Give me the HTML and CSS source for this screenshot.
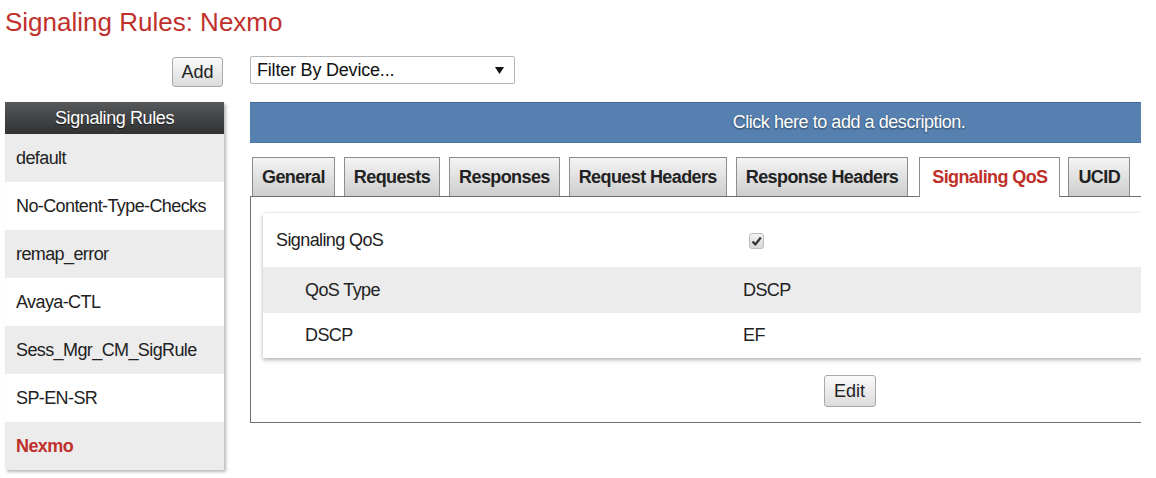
FILE: index.html
```html
<!DOCTYPE html>
<html>
<head>
<meta charset="utf-8">
<link rel="stylesheet" href="styles.css">
</head>
<body>
<h1 class="title">Signaling Rules: Nexmo</h1>
<div class="layout">
  <div class="side-tools"><button class="btn btn-add">Add</button></div>
  <div class="main-tools">
    <div class="select">
      <span>Filter By Device...</span>
      <svg class="caret" width="9" height="9" viewBox="0 0 9 9"><path d="M0 1h9L4.5 8z" fill="#111"/></svg>
    </div>
  </div>

  <div class="side">
    <div class="side-head">Signaling Rules</div>
    <ul class="side-list">
      <li class="alt">default</li>
      <li>No-Content-Type-Checks</li>
      <li class="alt">remap_error</li>
      <li>Avaya-CTL</li>
      <li class="alt">Sess_Mgr_CM_SigRule</li>
      <li>SP-EN-SR</li>
      <li class="alt active">Nexmo</li>
    </ul>
  </div>

  <div class="main-clip">
    <div class="main">
      <div class="desc">Click here to add a description.</div>
      <div class="tabs">
        <div class="tab">General</div>
        <div class="tab">Requests</div>
        <div class="tab">Responses</div>
        <div class="tab">Request Headers</div>
        <div class="tab">Response Headers</div>
        <div class="tab active">Signaling QoS</div>
        <div class="tab">UCID</div>
      </div>
      <div class="panel">
        <div class="table">
          <div class="row row-top">
            <div class="label">Signaling QoS</div>
            <div class="value"><span class="check"><svg width="11" height="10" viewBox="0 0 11 10"><path d="M1.5 5.5l2.8 3L9.8 1.5" fill="none" stroke="#333" stroke-width="2.2" stroke-linejoin="round"/></svg></span></div>
          </div>
          <div class="row alt">
            <div class="label indent">QoS Type</div>
            <div class="value">DSCP</div>
          </div>
          <div class="row row-last">
            <div class="label indent">DSCP</div>
            <div class="value">EF</div>
          </div>
        </div>
        <div class="actions"><button class="btn btn-edit">Edit</button></div>
      </div>
    </div>
  </div>
</div>
</body>
</html>
```
FILE: styles.css
```css
* { box-sizing: border-box; }
html, body { margin: 0; padding: 0; background: #fff; }
body {
  font-family: "Liberation Sans", Arial, sans-serif;
  font-size: 18px;
  letter-spacing: -0.6px;
  color: #222;
  width: 1156px;
  height: 478px;
  overflow: hidden;
}
.title {
  margin: 0;
  padding: 7px 0 0 5px;
  height: 56px;
  font-weight: normal;
  font-size: 26px;
  line-height: 30px;
  letter-spacing: 0;
  color: #c0302b;
}
.layout {
  display: grid;
  grid-template-columns: 219px 891px;
  grid-template-rows: 46px auto;
  column-gap: 26px;
  padding-left: 5px;
}
.side-tools {
  display: flex;
  justify-content: flex-end;
  align-items: flex-start;
  padding-top: 1px;
  padding-right: 1px;
}
.btn {
  font-family: "Liberation Sans", Arial, sans-serif;
  font-size: 18px;
  letter-spacing: 0;
  color: #222;
  background: linear-gradient(#fafafa, #dcdcdc);
  border: 1px solid #a9a9a9;
  border-radius: 3px;
  padding: 0;
  line-height: 28px;
}
.btn-add { width: 51px; height: 30px; }
.select {
  width: 265px;
  height: 28px;
  border: 1px solid #b5b5b5;
  border-radius: 2px;
  display: flex;
  align-items: center;
  justify-content: space-between;
  padding: 0 10px 0 6px;
  font-size: 18px;
  letter-spacing: -0.2px;
  color: #111;
}
.caret { margin-top: 1px; }

.side {
  box-shadow: 2px 2px 3px rgba(0,0,0,0.28);
  align-self: start;
}
.side-head {
  height: 32px;
  background: linear-gradient(#56585a, #2f3133);
  color: #fff;
  font-size: 18px;
  letter-spacing: -0.4px;
  text-align: center;
  line-height: 32px;
  text-shadow: 0 1px 1px rgba(0,0,0,0.6);
}
.side-list { list-style: none; margin: 0; padding: 0; }
.side-list li {
  height: 48px;
  line-height: 48px;
  padding-left: 11px;
  color: #222;
  background: #fff;
}
.side-list li.alt { background: #ececec; }
.side-list li.active { color: #c0302b; font-weight: bold; }

.main-clip { overflow: hidden; width: 891px; }
.main { width: 1198px; }
.desc {
  height: 41px;
  background: #5580b0;
  border-top: 1px solid #3e6694;
  border-bottom: 1px solid #4d76a6;
  color: #fff;
  font-size: 18px;
  letter-spacing: -0.45px;
  text-align: center;
  line-height: 39px;
  text-shadow: 0 1px 2px rgba(0,0,0,0.5);
}
.tabs {
  display: flex;
  align-items: flex-end;
  gap: 9px;
  padding: 14px 0 0 2px;
  position: relative;
  z-index: 1;
}
.tab {
  height: 39px;
  line-height: 38px;
  padding: 0 9px;
  font-weight: bold;
  color: #222;
  background: linear-gradient(#f4f4f4, #cdcdcd);
  border: 1px solid #8d8d8d;
  border-bottom: none;
}
.tab.active {
  background: #fff;
  color: #c0302b;
  height: 40px;
  padding: 0 12px;
  margin: 0 -1px -1px 2px;
}
.panel {
  border: 1px solid #707070;
  border-right: none;
  padding: 16px 0 15px 12px;
}
.table {
  box-shadow: 0 2px 4px rgba(0,0,0,0.3), 0 -1px 2px rgba(0,0,0,0.05);
}
.row {
  display: grid;
  grid-template-columns: 480px 1fr;
  height: 46px;
  align-items: center;
  color: #222;
}
.row-top { height: 54px; }
.row-last { height: 45px; }
.row.alt { background: #ececec; }
.label { padding-left: 13px; }
.label.indent { padding-left: 42px; }
.check {
  display: inline-flex;
  align-items: center;
  justify-content: center;
  width: 15px;
  height: 16px;
  margin-left: 6px;
  border: 1px solid #bdbdbd;
  border-radius: 3px;
  background: linear-gradient(#f3f3f3, #d8d8d8);
  vertical-align: middle;
}
.actions {
  display: flex;
  justify-content: center;
  padding-top: 17px;
  padding-right: 12px;
}
.btn-edit { width: 52px; height: 32px; }
```
